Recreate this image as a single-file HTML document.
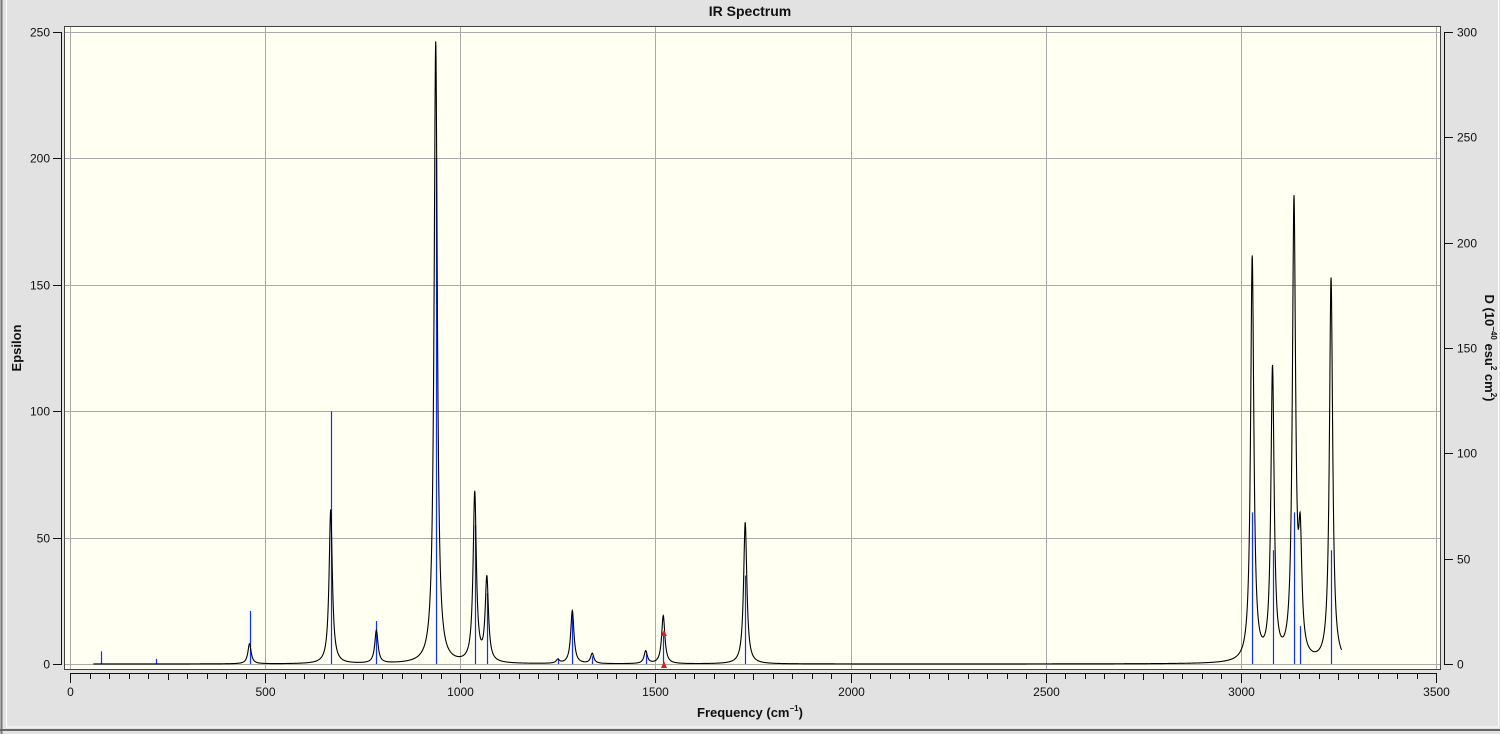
<!DOCTYPE html>
<html><head><meta charset="utf-8"><style>
html,body{margin:0;padding:0;background:#e2e2e2;}
svg{display:block;font-family:"Liberation Sans",sans-serif;}
</style></head><body>
<svg id="s" width="1500" height="734" viewBox="0 0 1500 734" xmlns="http://www.w3.org/2000/svg">
<rect x="0" y="0" width="1500" height="734" fill="#e2e2e2"/>
<line x1="1.5" y1="0" x2="1.5" y2="734" stroke="#777" stroke-width="2"/>
<rect x="6.5" y="-2" width="1492" height="729" fill="none" stroke="#fff" stroke-width="1"/>
<line x1="0" y1="730" x2="1500" y2="730" stroke="#666" stroke-width="2"/>
<text x="750" y="16" text-anchor="middle" font-size="14" font-weight="bold" fill="#111">IR Spectrum</text>
<rect x="64.5" y="26.5" width="1376" height="643" fill="#fffff2" stroke="#444" stroke-width="1"/>
<g id="grid" stroke="#aaa" stroke-width="1"></g>
<g id="axes" stroke="#111" stroke-width="1" fill="none"></g>
<g id="labels" font-size="12" fill="#111"></g>
<g id="sticks" stroke="#1030ff" stroke-width="1.2"></g>
<path id="curve" fill="none" stroke="#000" stroke-width="1.1"/>
<polygon points="661,636 667,636 664,630" fill="#e02020"/>
<polygon points="661,668 667,668 664,661" fill="#e02020"/>
<text transform="translate(21,348) rotate(-90)" text-anchor="middle" font-size="13" font-weight="bold" fill="#111">Epsilon</text>
<text transform="translate(1485,348) rotate(90)" text-anchor="middle" font-size="13" font-weight="bold" fill="#111">D (10<tspan font-size="8" dy="-6">−40</tspan><tspan dy="6"> esu</tspan><tspan font-size="8" dy="-6">2</tspan><tspan dy="6"> cm</tspan><tspan font-size="8" dy="-6">2</tspan><tspan dy="6">)</tspan></text>
<text x="750" y="717" text-anchor="middle" font-size="13" font-weight="bold" fill="#111">Frequency (cm<tspan font-size="8" dy="-6">−1</tspan><tspan dy="6">)</tspan></text>
</svg>
<script>
var NS="http://www.w3.org/2000/svg";
function X(f){return 70+f*0.3903;}
function Y(e){return 664-e*2.528;}
function el(p,t,a){var e=document.createElementNS(NS,t);for(var k in a)e.setAttribute(k,a[k]);document.getElementById(p).appendChild(e);return e;}
for(var f=500;f<=3000;f+=500){var x=Math.round(X(f))+0.5;el("grid","line",{x1:x,y1:27,x2:x,y2:669});}
for(var e=50;e<=200;e+=50){var y=Math.round(Y(e))+0.5;el("grid","line",{x1:65,y1:y,x2:1440,y2:y});}
el("grid","line",{x1:65,y1:32.5,x2:1440,y2:32.5});
el("grid","line",{x1:70.5,y1:27,x2:70.5,y2:669});
el("grid","line",{x1:1436.5,y1:27,x2:1436.5,y2:669});
el("grid","line",{x1:65,y1:664.5,x2:1440,y2:664.5});
el("axes","line",{x1:61.5,y1:32,x2:61.5,y2:665});
for(var e=0;e<=250;e+=50){var y=Math.round(Y(e))+0.5;el("axes","line",{x1:53,y1:y,x2:62,y2:y});
 var t=el("labels","text",{x:50,y:y+4,"text-anchor":"end"});t.textContent=e;}
el("axes","line",{x1:1444.5,y1:32,x2:1444.5,y2:665});
for(var d=0;d<=300;d+=50){var y=Math.round(664-d*632/300)+0.5;el("axes","line",{x1:1444,y1:y,x2:1453,y2:y});
 var t=el("labels","text",{x:1457,y:y+4});t.textContent=d;}
el("axes","line",{x1:70,y1:673.5,x2:1437,y2:673.5});
for(var f=0;f<=3500;f+=50){var x=Math.round(X(f))+0.5;var big=f%500==0,mid=f%250==0;
 el("axes","line",{x1:x,y1:673,x2:x,y2:big?683:(mid?680:679)});
 if(big){var t=el("labels","text",{x:x,y:696,"text-anchor":"middle"});t.textContent=f;}}
var P=[[80,0,5],[220,0,2],[460,8,21],[668,61,100],[785,13,17],[937,246,200],[1037,67,55],[1068,33,28],[1250,1.5,2],[1287,21,20],[1338,4,3],[1475,5,4],[1520,19,12],[1730,56,35],[3029,160,60],[3081,115,45],[3136,180,60],[3152,42,15],[3231,152,45]];
P.forEach(function(p){var x=Math.round(X(p[0]))+0.5;el("sticks","line",{x1:x,y1:664,x2:x,y2:Y(p[2])});});
var g=5,d="";
for(var f=60;f<=3258;f+=0.5){var s=0;P.forEach(function(p){if(p[1]>0){var u=(f-p[0])/g;s+=p[1]/(1+u*u);}});
 d+=(d?"L":"M")+X(f).toFixed(2)+" "+Y(s).toFixed(2);}
document.getElementById("curve").setAttribute("d",d);
</script>
</body></html>
